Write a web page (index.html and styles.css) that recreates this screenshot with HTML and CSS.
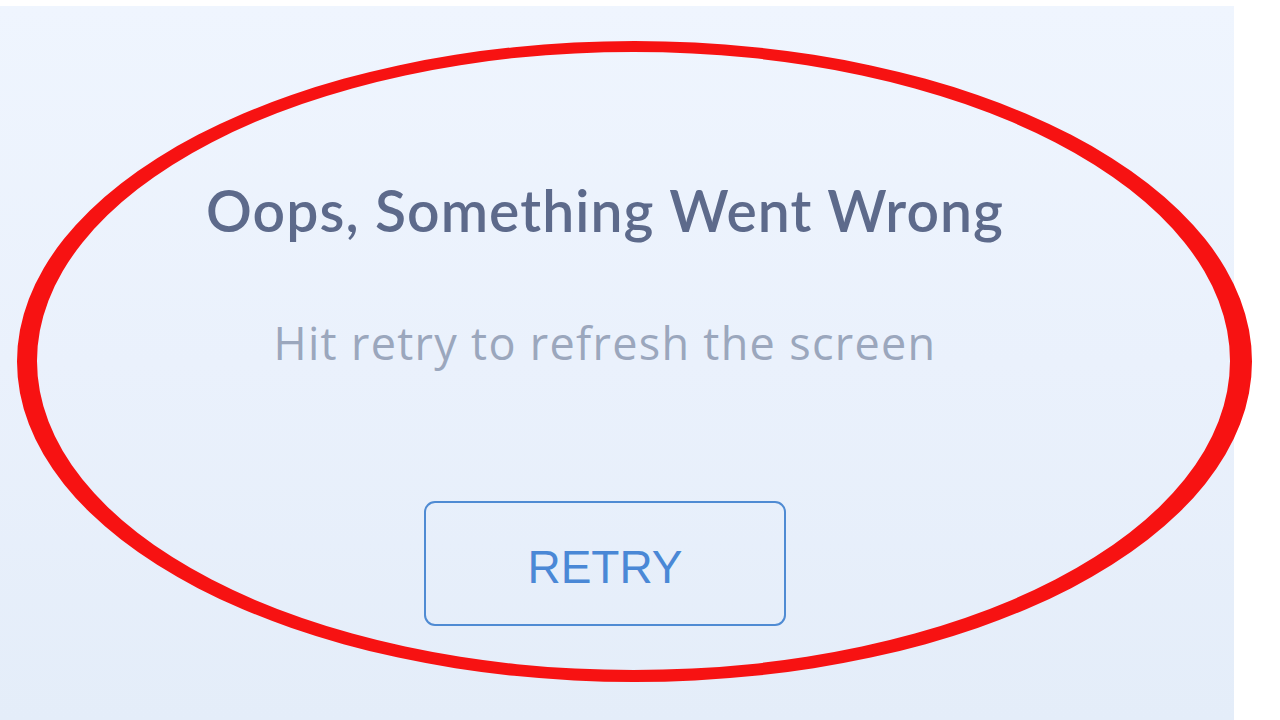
FILE: index.html
```html
<!DOCTYPE html>
<html>
<head>
<meta charset="utf-8">
<link rel="stylesheet" href="styles.css">
</head>
<body>
<div class="page">
  <main class="panel">
    <h1 class="title">Oops, Something Went Wrong</h1>
    <p class="subtitle">Hit retry to refresh the screen</p>
    <button class="retry">RETRY</button>
  </main>
  <svg class="ring" width="1280" height="720" viewBox="0 0 1280 720" aria-hidden="true">
    <path fill="#f71212" fill-rule="evenodd"
      d="M17,361.5 a617.5,320.5 0 1,0 1235,0 a617.5,320.5 0 1,0 -1235,0 Z
         M37,361 a596.5,309 0 1,0 1193,0 a596.5,309 0 1,0 -1193,0 Z"/>
  </svg>
</div>
</body>
</html>
```
FILE: styles.css
```css
html, body {
  margin: 0;
  padding: 0;
  background: #ffffff;
}
.page {
  position: relative;
  width: 1280px;
  height: 720px;
  overflow: hidden;
  padding-top: 6px;
  box-sizing: border-box;
}
.panel {
  width: 1234px;
  height: 714px;
  background: linear-gradient(180deg, #eff5fe 0%, #eaf1fc 50%, #e4edf9 100%);
  display: flex;
  flex-direction: column;
  align-items: center;
  padding-right: 24px;
  box-sizing: border-box;
}
.title {
  margin: 169px 0 0 0;
  font-family: "Lato", "Noto Sans", sans-serif;
  font-weight: 600;
  font-size: 57px;
  line-height: 70px;
  color: #5d6a8b;
  letter-spacing: 1.1px;
}
.subtitle {
  margin: 74px 0 0 0;
  font-family: "Open Sans", "Noto Sans", sans-serif;
  font-weight: 400;
  font-size: 45px;
  line-height: 48px;
  color: #9ba7bd;
  letter-spacing: 1.3px;
}
.retry {
  margin-top: 134px;
  width: 362px;
  height: 125px;
  border: 2.5px solid #4f8bd3;
  border-radius: 11px;
  background: transparent;
  font-family: "Liberation Sans", Arial, sans-serif;
  font-size: 46px;
  font-weight: 400;
  color: #4a88d6;
  padding: 6px 0 0 0;
}
.ring {
  position: absolute;
  left: 0;
  top: 0;
  filter: blur(0.6px);
}
```
